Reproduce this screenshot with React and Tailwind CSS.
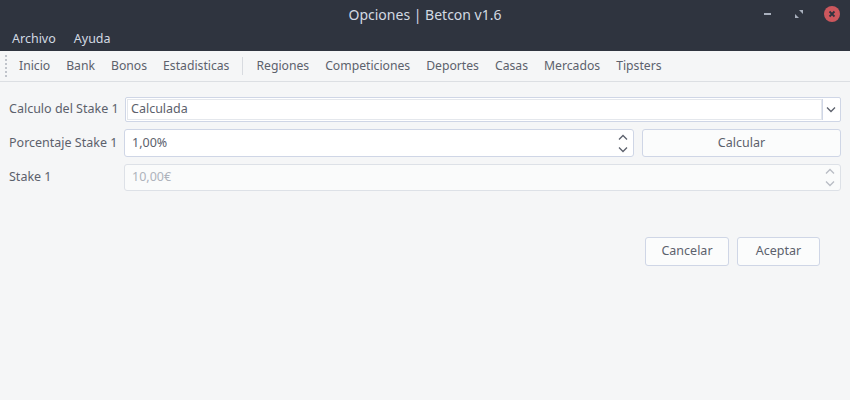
import React from "react";

const font = { fontFamily: '"Noto Sans", "Open Sans", sans-serif' };

function Chevron({ dir = "down", className = "" }) {
  const d = dir === "down" ? "M1 1.5 L5 5.5 L9 1.5" : "M1 5.5 L5 1.5 L9 5.5";
  return (
    <svg width="10" height="7" viewBox="0 0 10 7" className={className}>
      <path d={d} fill="none" stroke="currentColor" strokeWidth="1.3" />
    </svg>
  );
}

function Spin({ faded }) {
  return (
    <div className={`flex flex-col items-center justify-center gap-[5px] w-[20px] ${faded ? "text-[#b8bcc4]" : "text-[#5c616c]"}`}>
      <Chevron dir="up" />
      <Chevron dir="down" />
    </div>
  );
}

export default function App() {
  const tools1 = ["Inicio", "Bank", "Bonos", "Estadisticas"];
  const tools2 = ["Regiones", "Competiciones", "Deportes", "Casas", "Mercados", "Tipsters"];

  return (
    <div className="w-[850px] h-[400px] bg-[#f5f6f7] text-[12.5px] text-[#5c616c] flex flex-col" style={font}>
      {/* title + menu */}
      <div className="bg-[#2f343f] h-[51px] flex flex-col">
        <div className="h-[28px] flex items-center relative">
          <div className="flex-1 text-center text-[14px] text-[#d3dae3] pt-[1px]">Opciones | Betcon v1.6</div>
          <div className="absolute right-[10px] top-[6px] flex items-center gap-[20px]">
            <div className="w-[7px] h-[2px] bg-[#a9b0bd] mr-[3px]" />
            <svg width="10" height="10" viewBox="0 0 10 10">
              <path d="M5 1 H9 V5 Z M1 5 V9 H5 Z" fill="#a9b0bd" />
            </svg>
            <div className="w-[16px] h-[16px] rounded-full bg-[#cc575d] flex items-center justify-center">
              <svg width="8" height="8" viewBox="0 0 8 8">
                <path d="M1.5 1.5 L6.5 6.5 M6.5 1.5 L1.5 6.5" stroke="#2f343f" strokeWidth="1.8" />
              </svg>
            </div>
          </div>
        </div>
        <div className="flex items-center h-[23px] pl-[12px] gap-[18px] text-[#d3dae3]">
          <span>Archivo</span>
          <span>Ayuda</span>
        </div>
      </div>

      {/* toolbar */}
      <div className="h-[31px] border-b border-[#dcdfe3] flex items-center pl-[5px] text-[12.2px]">
        <div className="flex flex-col gap-[2px] mr-[4px]">
          {[0, 1, 2, 3, 4, 5].map((i) => (
            <div key={i} className="w-[2px] h-[2px] bg-[#c0c4cb]" />
          ))}
        </div>
        {tools1.map((t) => (
          <span key={t} className="px-[8px]">{t}</span>
        ))}
        <div className="w-px h-[18px] bg-[#d8dbe0] mx-[5px]" />
        {tools2.map((t) => (
          <span key={t} className="px-[8px]">{t}</span>
        ))}
      </div>

      {/* form */}
      <div className="px-[9px] pt-[15px] flex flex-col gap-[7px]">
        <div className="flex items-center h-[25px]">
          <div className="w-[115px]">Calculo del Stake 1</div>
          <div className="flex-1 h-[25px] border border-[#cfd6e6] rounded-[2px] bg-white flex items-center ml-[1px] p-[1px]">
            <div className="flex-1 h-full border border-[#e4e7ec] flex items-center pl-[3px]">Calculada</div>
            <div className="w-[17px] h-full border-l border-[#cfd6e6] flex items-center justify-center text-[#5c616c]">
              <Chevron dir="down" />
            </div>
          </div>
        </div>
        <div className="flex items-center h-[28px]">
          <div className="w-[115px]">Porcentaje Stake 1</div>
          <div className="w-[510px] h-[28px] border border-[#cfd6e6] rounded-[3px] bg-white flex items-center pl-[7px]">
            <span className="flex-1">1,00%</span>
            <Spin />
          </div>
          <button className="ml-[8px] flex-1 h-[28px] border border-[#cfd6e6] rounded-[3px] bg-[#fbfcfc] text-[#5c616c]">Calcular</button>
        </div>
        <div className="flex items-center h-[27px]">
          <div className="w-[115px]">Stake 1</div>
          <div className="flex-1 h-[27px] border border-[#dde1e7] rounded-[3px] bg-[#fafbfb] flex items-center pl-[7px] text-[#aeb3bb]">
            <span className="flex-1">10,00€</span>
            <Spin faded />
          </div>
        </div>
      </div>

      <div className="flex justify-end gap-[8px] pr-[30px] pt-[46px]">
        <button className="w-[84px] h-[29px] border border-[#cfd6e6] rounded-[3px] bg-[#fbfcfc]">Cancelar</button>
        <button className="w-[83px] h-[29px] border border-[#cfd6e6] rounded-[3px] bg-[#fbfcfc]">Aceptar</button>
      </div>
    </div>
  );
}
